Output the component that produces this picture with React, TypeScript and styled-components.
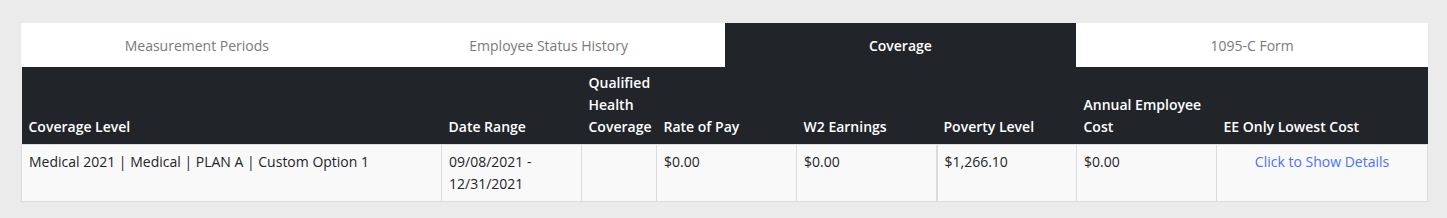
import React from 'react'
import styled, { createGlobalStyle } from 'styled-components'

const GlobalStyle = createGlobalStyle`
  html, body {
    margin: 0;
    padding: 0;
    background: #ebebeb;
    font-family: "Open Sans", "Liberation Sans", sans-serif;
  }
`

const tabs = ['Measurement Periods', 'Employee Status History', 'Coverage', '1095-C Form']

const columns = [
  { title: 'Coverage Level', width: 420 },
  { title: 'Date Range', width: 140 },
  { title: 'Qualified Health Coverage', width: 75 },
  { title: 'Rate of Pay', width: 140 },
  { title: 'W2 Earnings', width: 140 },
  { title: 'Poverty Level', width: 140 },
  { title: 'Annual Employee Cost', width: 140 },
  { title: 'EE Only Lowest Cost', width: 211 },
]

const row = [
  'Medical 2021 | Medical | PLAN A | Custom Option 1',
  '09/08/2021 - 12/31/2021',
  '',
  '$0.00',
  '$0.00',
  '$1,266.10',
  '$0.00',
]

const App = () => {
  const active = 2
  return (
    <Page>
      <GlobalStyle />
      <Panel>
        <TabBar>
          {tabs.map((t, i) => (
            <Tab key={t} active={i === active}>{t}</Tab>
          ))}
        </TabBar>
        <Table>
          <colgroup>
            {columns.map(c => (
              <col key={c.title} style={{ width: c.width }} />
            ))}
          </colgroup>
          <thead>
            <tr>
              {columns.map(c => (
                <Th key={c.title}>{c.title}</Th>
              ))}
            </tr>
          </thead>
          <tbody>
            <tr>
              {row.map((v, i) => (
                <Td key={i} thick={i === 5}>{v}</Td>
              ))}
              <Td center>
                <DetailsLink href="#">Click to Show Details</DetailsLink>
              </Td>
            </tr>
          </tbody>
        </Table>
      </Panel>
    </Page>
  )
}

export default App

const Page = styled.div`
  padding: 23px 19px 17px 21px;
`

const Panel = styled.div`
  width: 1407px;
`

const TabBar = styled.div`
  display: grid;
  grid-template-columns: repeat(4, 1fr);
  height: 44px;
  background: #fff;
`

const Tab = styled.div<{ active?: boolean }>`
  display: flex;
  align-items: center;
  justify-content: center;
  font-size: 14px;
  background: ${({ active }) => (active ? '#212428' : '#fff')};
  color: ${({ active }) => (active ? '#fff' : '#7a7a7a')};
  font-weight: ${({ active }) => (active ? 600 : 400)};
  cursor: pointer;
`

const Table = styled.table`
  width: 1407px;
  border-collapse: collapse;
  table-layout: fixed;
  font-size: 14px;
`

const Th = styled.th`
  background: #212529;
  color: #fff;
  font-weight: 600;
  text-align: left;
  vertical-align: bottom;
  line-height: 22px;
  padding: 4px 7px 6px;
  height: 67px;
`

const Td = styled.td<{ thick?: boolean; center?: boolean }>`
  background: #f9f9f9;
  color: #212529;
  vertical-align: top;
  line-height: 22px;
  padding: 6px 7px;
  height: 43px;
  border: 1px solid #dcdcdc;
  border-left-width: ${({ thick }) => (thick ? '2px' : '1px')};
  text-align: ${({ center }) => (center ? 'center' : 'left')};
`

const DetailsLink = styled.a`
  color: #4a72f5;
  text-decoration: none;
`
